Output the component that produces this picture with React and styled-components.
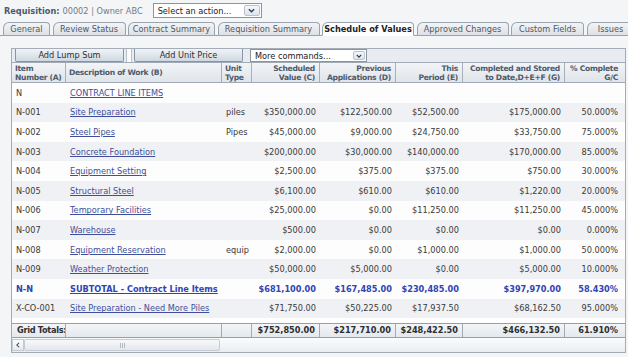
import React from 'react';
import styled, { createGlobalStyle } from 'styled-components';

const COLS = '54px 156px 30px 68px 76px 67px 102px 60px';

const GlobalStyle = createGlobalStyle`
  html, body {
    margin: 0;
    padding: 0;
    background: #f4f5f7;
  }
  body {
    font-family: 'DejaVu Sans', Verdana, sans-serif;
    font-size: 8.2px;
    color: #3a3a3a;
  }
`;

const Page = styled.div`
  width: 628px;
  height: 357px;
  overflow: hidden;
  display: flex;
  flex-direction: column;
`;

const TitleBar = styled.div`
  height: 21px;
  display: flex;
  align-items: center;
  padding-left: 4px;
  color: #6e7c8a;
`;

const TitleLabel = styled.span`
  font-weight: bold;
  color: #4c5b6c;
  margin-right: 3px;
`;

const FakeSelect = styled.div`
  margin-left: ${p => p.$offset || 0}px;
  width: ${p => p.$width}px;
  height: ${p => p.$height || 15}px;
  box-sizing: border-box;
  border: 1px solid #8c959e;
  background: #fff;
  display: flex;
  align-items: center;
  color: #222;
  padding-left: 4px;
`;

const SelectText = styled.span`
  flex: 1;
  white-space: nowrap;
`;

const ArrowBox = styled.span`
  width: ${p => p.$w || 15}px;
  height: calc(100% - 2px);
  margin-right: 1px;
  box-sizing: border-box;
  border: 1px solid #b9c3ce;
  border-radius: 2px;
  background: linear-gradient(#f5f8fb, #dce4ec);
  display: flex;
  align-items: center;
  justify-content: center;
`;

const TabStrip = styled.div`
  height: 14px;
  display: flex;
  align-items: flex-end;
  border-bottom: 1px solid #99a3ad;
  padding-left: 3px;
  gap: 2.5px;
`;

const Tab = styled.div`
  width: ${p => p.$w}px;
  flex-shrink: 0;
  height: ${p => (p.$active ? 14 : 13)}px;
  margin-bottom: ${p => (p.$active ? -1 : 0)}px;
  box-sizing: border-box;
  border: 1px solid #9aa4ae;
  border-bottom: ${p => (p.$active ? '1px solid #fff' : 'none')};
  border-radius: 6px 4px 0 0;
  background: ${p => (p.$active ? '#fff' : 'linear-gradient(#f3f4f6, #dde1e5)')};
  color: ${p => (p.$active ? '#222' : '#4d5864')};
  font-weight: ${p => (p.$active ? 'bold' : 'normal')};
  display: flex;
  align-items: center;
  justify-content: center;
  white-space: nowrap;
  overflow: hidden;
`;

const Panel = styled.div`
  margin: 12px 0 0 11px;
  width: 613px;
  border-left: 1px solid #a3abb4;
  border-right: 1px solid #a3abb4;
  background: #fff;
  display: flex;
  flex-direction: column;
`;

const Toolbar = styled.div`
  height: 14px;
  box-sizing: border-box;
  border-top: 1px solid #a5aeb8;
  background: #e8ebef;
  display: flex;
  align-items: stretch;
  padding-left: 3px;
`;

const ToolButton = styled.div`
  width: 109px;
  box-sizing: border-box;
  border: 1px solid #8595a6;
  border-top: none;
  border-radius: 0 0 2px 2px;
  background: linear-gradient(#f1f4f7, #cfd8e1);
  display: flex;
  align-items: center;
  justify-content: center;
  color: #2c3034;
`;

const ToolSeparator = styled.div`
  width: 4px;
  margin: 0 2px;
  border-left: 1px solid #b9c1c9;
  border-right: 1px solid #b9c1c9;
  background: #fbfbfc;
`;

const Gap = styled.div`
  width: ${p => p.$w}px;
`;

const HeaderRow = styled.div`
  display: grid;
  grid-template-columns: ${COLS};
  height: 21px;
  box-sizing: border-box;
  border-top: 1px solid #a1abb6;
  border-bottom: 1px solid #a1abb6;
  background: linear-gradient(#f2f4f7, #dfe4ea);
`;

const HeadCell = styled.div`
  display: flex;
  align-items: center;
  justify-content: ${p => (p.$right ? 'flex-end' : 'flex-start')};
  text-align: ${p => (p.$right ? 'right' : 'left')};
  padding: 0 ${p => (p.$last ? 7 : 4)}px 0 3px;
  border-right: ${p => (p.$last ? 'none' : '1px solid #a6b0bb')};
  font-size: 7.6px;
  letter-spacing: -0.3px;
  font-weight: bold;
  color: #4e5b6b;
  line-height: 9px;
  white-space: nowrap;
  min-width: 0;
`;

const Body = styled.div`
  display: flex;
  flex-direction: column;
`;

const Row = styled.div`
  display: grid;
  grid-template-columns: ${COLS};
  height: 19.6px;
  align-items: center;
  background: ${p => (p.$alt ? '#eff1f4' : '#fdfdfd')};
  color: ${p => (p.$sub ? '#2f44b5' : '#3a3a3a')};
  font-weight: ${p => (p.$sub ? 'bold' : 'normal')};
`;

const Cell = styled.div`
  padding: 0 ${p => (p.$last ? 7 : 4)}px 0 4px;
  text-align: ${p => (p.$right ? 'right' : 'left')};
  white-space: nowrap;
  overflow: hidden;
`;

const Link = styled.a`
  color: ${p => (p.$sub ? '#2f44b5' : '#3f4f9c')};
  text-decoration: underline;
  cursor: pointer;
`;

const TotalsRow = styled.div`
  margin-top: 4.5px;
  display: grid;
  grid-template-columns: ${COLS};
  height: 15px;
  box-sizing: border-box;
  border-top: 1px solid #939fab;
  border-bottom: 1px solid #939fab;
  background: linear-gradient(#f3f5f8, #e4e9ee);
  font-weight: bold;
  color: #2e2e2e;
`;

const TotalCell = styled.div`
  display: flex;
  align-items: center;
  justify-content: ${p => (p.$right ? 'flex-end' : 'flex-start')};
  padding: 0 ${p => (p.$last ? 7 : 4)}px 0 ${p => (p.$first ? 5 : 4)}px;
  border-right: ${p => (p.$last ? 'none' : '1px solid #a0abb6')};
  white-space: nowrap;
  overflow: hidden;
  letter-spacing: ${p => (p.$first ? '-0.3px' : '0')};
`;

const ScrollArea = styled.div`
  height: 15px;
  box-sizing: border-box;
  border-bottom: 1px solid #a3abb4;
  background: linear-gradient(#fafbfc, #eaedf0);
  display: flex;
  align-items: center;
  padding-top: 1px;
`;

const ScrollButton = styled.div`
  width: 12px;
  height: 12px;
  box-sizing: border-box;
  border: 1px solid #c3cad2;
  background: linear-gradient(#fdfdfe, #e6eaee);
  display: flex;
  align-items: center;
  justify-content: center;
`;

const ScrollThumb = styled.div`
  width: 196px;
  height: 12px;
  box-sizing: border-box;
  border: 1px solid #c6ccd3;
  border-radius: 2px;
  background: linear-gradient(#f8f9fb, #e3e7eb);
  display: flex;
  align-items: center;
  justify-content: center;
  gap: 1px;
`;

const Grip = styled.span`
  width: 1px;
  height: 5px;
  background: #b3bac2;
`;

const Chevron = ({ dir = 'down', size = 7 }) => (
  <svg width={size} height={size} viewBox="0 0 8 8">
    {dir === 'down' ? (
      <path d="M1 2.5 L4 5.5 L7 2.5" fill="none" stroke="#2f3c55" strokeWidth="1.6" />
    ) : (
      <path d="M5.5 1 L2.5 4 L5.5 7" fill="none" stroke="#2f3c55" strokeWidth="1.4" />
    )}
  </svg>
);

const tabs = [
  { label: 'General', w: 47 },
  { label: 'Review Status', w: 73 },
  { label: 'Contract Summary', w: 87 },
  { label: 'Requisition Summary', w: 102 },
  { label: 'Schedule of Values', w: 92, active: true },
  { label: 'Approved Changes', w: 92 },
  { label: 'Custom Fields', w: 73 },
  { label: 'Issues', w: 48 },
];

const headers = [
  { text: ['Item', 'Number (A)'] },
  { text: ['Description of Work (B)'] },
  { text: ['Unit', 'Type'] },
  { text: ['Scheduled', 'Value (C)'], right: true },
  { text: ['Previous', 'Applications (D)'], right: true },
  { text: ['This', 'Period (E)'], right: true },
  { text: ['Completed and Stored', 'to Date,D+E+F (G)'], right: true },
  { text: ['% Complete', 'G/C'], right: true },
];

const rows = [
  { item: 'N', desc: 'CONTRACT LINE ITEMS' },
  { item: 'N-001', desc: 'Site Preparation', unit: 'piles', c: '$350,000.00', d: '$122,500.00', e: '$52,500.00', g: '$175,000.00', pct: '50.000%' },
  { item: 'N-002', desc: 'Steel Pipes', unit: 'Pipes', c: '$45,000.00', d: '$9,000.00', e: '$24,750.00', g: '$33,750.00', pct: '75.000%' },
  { item: 'N-003', desc: 'Concrete Foundation', c: '$200,000.00', d: '$30,000.00', e: '$140,000.00', g: '$170,000.00', pct: '85.000%' },
  { item: 'N-004', desc: 'Equipment Setting', c: '$2,500.00', d: '$375.00', e: '$375.00', g: '$750.00', pct: '30.000%' },
  { item: 'N-005', desc: 'Structural Steel', c: '$6,100.00', d: '$610.00', e: '$610.00', g: '$1,220.00', pct: '20.000%' },
  { item: 'N-006', desc: 'Temporary Facilities', c: '$25,000.00', d: '$0.00', e: '$11,250.00', g: '$11,250.00', pct: '45.000%' },
  { item: 'N-007', desc: 'Warehouse', c: '$500.00', d: '$0.00', e: '$0.00', g: '$0.00', pct: '0.000%' },
  { item: 'N-008', desc: 'Equipment Reservation', unit: 'equip', c: '$2,000.00', d: '$0.00', e: '$1,000.00', g: '$1,000.00', pct: '50.000%' },
  { item: 'N-009', desc: 'Weather Protection', c: '$50,000.00', d: '$5,000.00', e: '$0.00', g: '$5,000.00', pct: '10.000%' },
  { item: 'N-N', desc: 'SUBTOTAL - Contract Line Items', c: '$681,100.00', d: '$167,485.00', e: '$230,485.00', g: '$397,970.00', pct: '58.430%', sub: true },
  { item: 'X-CO-001', desc: 'Site Preparation - Need More Piles', c: '$71,750.00', d: '$50,225.00', e: '$17,937.50', g: '$68,162.50', pct: '95.000%' },
];

const totals = ['Grid Totals:', '', '', '$752,850.00', '$217,710.00', '$248,422.50', '$466,132.50', '61.910%'];

export default function App() {
  return (
    <Page>
      <GlobalStyle />
      <TitleBar>
        <TitleLabel>Requisition:</TitleLabel>
        <span>00002 | Owner ABC</span>
        <FakeSelect $offset={10} $width={109}>
          <SelectText>Select an action...</SelectText>
          <ArrowBox $w={16}><Chevron /></ArrowBox>
        </FakeSelect>
      </TitleBar>

      <TabStrip>
        {tabs.map(t => (
          <Tab key={t.label} $w={t.w} $active={t.active}>{t.label}</Tab>
        ))}
      </TabStrip>

      <Panel>
        <Toolbar>
          <ToolButton>Add Lump Sum</ToolButton>
          <ToolSeparator />
          <ToolButton>Add Unit Price</ToolButton>
          <Gap $w={7} />
          <FakeSelect $width={117} $height={13}>
            <SelectText>More commands...</SelectText>
            <ArrowBox $w={12}><Chevron size={6} /></ArrowBox>
          </FakeSelect>
        </Toolbar>

        <HeaderRow>
          {headers.map((h, i) => (
            <HeadCell key={i} $right={h.right} $last={i === headers.length - 1}>
              <div>
                {h.text.map((line, j) => (
                  <div key={j}>{line}</div>
                ))}
              </div>
            </HeadCell>
          ))}
        </HeaderRow>

        <Body>
          {rows.map((r, i) => (
            <Row key={r.item} $alt={i % 2 === 1} $sub={r.sub}>
              <Cell>{r.item}</Cell>
              <Cell><Link $sub={r.sub}>{r.desc}</Link></Cell>
              <Cell>{r.unit}</Cell>
              <Cell $right>{r.c}</Cell>
              <Cell $right>{r.d}</Cell>
              <Cell $right>{r.e}</Cell>
              <Cell $right>{r.g}</Cell>
              <Cell $right $last>{r.pct}</Cell>
            </Row>
          ))}
        </Body>

        <TotalsRow>
          {totals.map((t, i) => (
            <TotalCell key={i} $first={i === 0} $right={i > 2} $last={i === totals.length - 1}>{t}</TotalCell>
          ))}
        </TotalsRow>

        <ScrollArea>
          <ScrollButton><Chevron dir="left" size={6} /></ScrollButton>
          <ScrollThumb>
            <Grip /><Grip /><Grip />
          </ScrollThumb>
        </ScrollArea>
      </Panel>
    </Page>
  );
}
